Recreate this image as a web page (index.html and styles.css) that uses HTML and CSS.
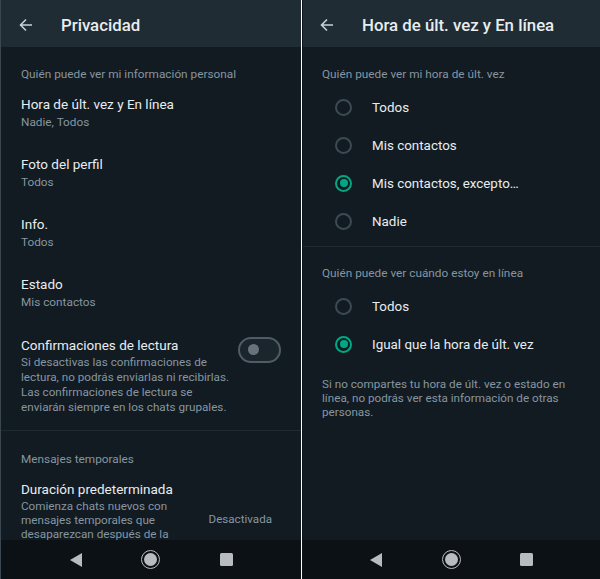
FILE: index.html
```html
<!DOCTYPE html>
<html lang="es">
<head>
    <meta charset="UTF-8">
    <title>Privacidad</title>
    <link rel="stylesheet" href="styles.css">
</head>
<body>
<div class="screens">
    <!-- pantalla 1: privacidad -->
    <div class="phone phone-left">
        <div class="top">
            <svg class="back" viewBox="0 0 16 16" width="16" height="16"><path d="M14 8H3M8 2.5 2.5 8 8 13.5" fill="none" stroke="#c9d0d4" stroke-width="1.6"/></svg>
            <span class="title">Privacidad</span>
        </div>
        <div class="content">
            <div class="sec">Quién puede ver mi información personal</div>
            <div class="item">
                <div class="item-title">Hora de últ. vez y En línea</div>
                <div class="item-sub">Nadie, Todos</div>
            </div>
            <div class="item">
                <div class="item-title">Foto del perfil</div>
                <div class="item-sub">Todos</div>
            </div>
            <div class="item">
                <div class="item-title">Info.</div>
                <div class="item-sub">Todos</div>
            </div>
            <div class="item">
                <div class="item-title">Estado</div>
                <div class="item-sub">Mis contactos</div>
            </div>
            <div class="item-long">
                <div class="text">
                    <div class="item-title">Confirmaciones de lectura</div>
                    <div class="desc">Si desactivas las confirmaciones de lectura, no podrás enviarlas ni recibirlas. Las confirmaciones de lectura se enviarán siempre en los chats grupales.</div>
                </div>
                <div class="toggle"><span class="thumb"></span></div>
            </div>
            <div class="divider"></div>
            <div class="sec sec-temp">Mensajes temporales</div>
            <div class="item-long item-dur">
                <div class="text">
                    <div class="item-title">Duración predeterminada</div>
                    <div class="desc">Comienza chats nuevos con mensajes temporales que desaparezcan después de la</div>
                </div>
                <div class="value">Desactivada</div>
            </div>
        </div>
        <div class="nav">
            <span class="nav-back"></span>
            <span class="nav-home"></span>
            <span class="nav-recent"></span>
        </div>
    </div>

    <!-- pantalla 2: hora de ult. vez -->
    <div class="phone phone-right">
        <div class="top">
            <svg class="back" viewBox="0 0 16 16" width="16" height="16"><path d="M14 8H3M8 2.5 2.5 8 8 13.5" fill="none" stroke="#c9d0d4" stroke-width="1.6"/></svg>
            <span class="title">Hora de últ. vez y En línea</span>
        </div>
        <div class="content">
            <div class="sec">Quién puede ver mi hora de últ. vez</div>
            <div class="radios">
                <div class="radio"><span class="dot"></span>Todos</div>
                <div class="radio"><span class="dot"></span>Mis contactos</div>
                <div class="radio on"><span class="dot"></span>Mis contactos, excepto…</div>
                <div class="radio"><span class="dot"></span>Nadie</div>
            </div>
            <div class="divider"></div>
            <div class="sec sec2">Quién puede ver cuándo estoy en línea</div>
            <div class="radios">
                <div class="radio"><span class="dot"></span>Todos</div>
                <div class="radio on"><span class="dot"></span>Igual que la hora de últ. vez</div>
            </div>
            <div class="note">Si no compartes tu hora de últ. vez o estado en línea, no podrás ver esta información de otras personas.</div>
        </div>
        <div class="nav">
            <span class="nav-back"></span>
            <span class="nav-home"></span>
            <span class="nav-recent"></span>
        </div>
    </div>
</div>
</body>
</html>
```

FILE: styles.css
```css
* {
    margin: 0;
    padding: 0;
    box-sizing: border-box;
}

body {
    background: #fff;
    font-family: Roboto, "Noto Sans", "Liberation Sans", sans-serif;
}

.screens {
    display: flex;
    gap: 1px;
    height: 579px;
    overflow: hidden;
}

.phone {
    display: flex;
    flex-direction: column;
    height: 579px;
    background: #121b22;
    color: #e9edef;
}

.phone-left {
    width: 301px;
    border-left: 1px solid #3a4650;
}

.phone-right {
    width: 298px;
    border-left: 1px solid #0c141a;
}

.top {
    height: 47px;
    flex: none;
    display: flex;
    align-items: center;
    padding-top: 2px;
    background: #1f2c34;
}

.back {
    margin-left: 17px;
    flex: none;
}

.title {
    margin-left: 27px;
    font-size: 16.8px;
    font-weight: 500;
    color: #e9edef;
}

.phone-right .back {
    margin-left: 16px;
}

.phone-right .title {
    margin-left: 27px;
}

.content {
    flex: 1;
    overflow: hidden;
}

.sec {
    padding: 18.5px 0 0 20px;
    font-size: 11.8px;
    line-height: 17px;
    color: #8696a0;
}

.sec-temp {
    padding-top: 20px;
}

.phone-right .sec {
    padding-left: 19px;
}

.phone-right .sec2 {
    padding-top: 17.5px;
}

.item {
    height: 60px;
    padding-left: 20px;
    display: flex;
    flex-direction: column;
    justify-content: center;
}

.item-title {
    font-size: 13.5px;
    line-height: 19px;
    color: #e9edef;
}

.item-sub {
    font-size: 11.8px;
    line-height: 17px;
    color: #8696a0;
}

.item-long {
    display: flex;
    align-items: flex-start;
    padding: 13px 0 15px 20px;
}

.item-long .text {
    width: 214px;
}

.desc {
    font-size: 11.7px;
    line-height: 15px;
    color: #8696a0;
}

.toggle {
    margin: 1px 0 0 3px;
    width: 43px;
    height: 26px;
    border: 2px solid #4f5c65;
    border-radius: 13px;
    background: #1b252c;
    display: flex;
    align-items: center;
    padding-left: 8px;
}

.thumb {
    width: 11px;
    height: 11px;
    border-radius: 50%;
    background: #66737b;
}

.divider {
    height: 1px;
    background: #1f2a31;
}

.item-dur {
    padding-top: 12px;
    padding-bottom: 0;
}

.item-dur .text {
    width: 160px;
}

.item-dur .desc {
    line-height: 14px;
}

.value {
    margin: 32px 29px 0 auto;
    font-size: 11.6px;
    color: #8696a0;
}

.radios {
    padding-top: 5.5px;
}

.radio {
    height: 38px;
    display: flex;
    align-items: center;
    padding-left: 32px;
    font-size: 13.4px;
    color: #e9edef;
}

.dot {
    width: 17px;
    height: 17px;
    border: 2px solid #3c4a53;
    border-radius: 50%;
    margin-right: 20px;
    display: flex;
    align-items: center;
    justify-content: center;
}

.radio.on .dot {
    border-color: #00a884;
}

.radio.on .dot::after {
    content: "";
    width: 8px;
    height: 8px;
    border-radius: 50%;
    background: #00a884;
}

.phone-right .divider {
    margin-top: 6px;
}

.note {
    padding: 14px 20px 0 19px;
    font-size: 11.7px;
    line-height: 14px;
    color: #8696a0;
}

.nav {
    height: 39px;
    flex: none;
    background: #0b1115;
    display: flex;
    align-items: center;
    justify-content: center;
    gap: 59.5px;
}

.nav-back {
    width: 0;
    height: 0;
    border-top: 7px solid transparent;
    border-bottom: 7px solid transparent;
    border-right: 12px solid #b8bcbf;
}

.nav-home {
    width: 19px;
    height: 19px;
    border: 1.5px solid #b8bcbf;
    border-radius: 50%;
    display: flex;
    align-items: center;
    justify-content: center;
}

.nav-home::after {
    content: "";
    width: 13px;
    height: 13px;
    border-radius: 50%;
    background: #b8bcbf;
}

.nav-recent {
    width: 13px;
    height: 13px;
    border-radius: 1.5px;
    background: #b8bcbf;
}
```
